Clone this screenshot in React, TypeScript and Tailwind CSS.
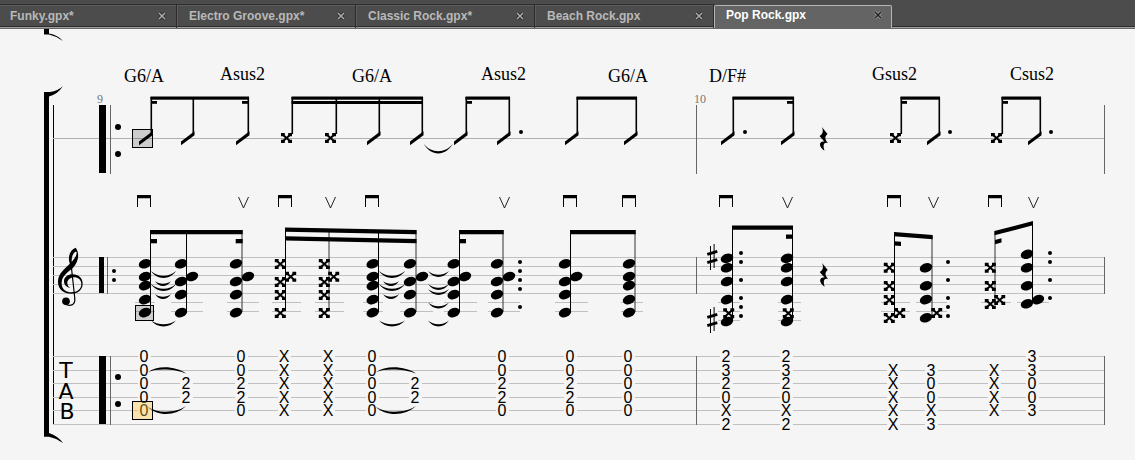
import React, { useState } from 'react';

const files = ['Funky.gpx*', 'Electro Groove.gpx*', 'Classic Rock.gpx*', 'Beach Rock.gpx', 'Pop Rock.gpx'];

type Side = 'left' | 'right';
type Point = [number, number];

const chords = [
  { x: 124, y: 82, name: 'G6/A' },
  { x: 220, y: 80, name: 'Asus2' },
  { x: 352, y: 82, name: 'G6/A' },
  { x: 481, y: 80, name: 'Asus2' },
  { x: 608, y: 82, name: 'G6/A' },
  { x: 709, y: 82, name: 'D/F#' },
  { x: 872, y: 80, name: 'Gsus2' },
  { x: 1010, y: 80, name: 'Csus2' },
];

// Rhythm staff: one entry per beamed group
interface RhythmGroup {
  stems: number[];
  dead?: number;
  double?: boolean;
  stubs?: [number, Side][];
  dots?: number[];
}

const rhythm: RhythmGroup[] = [
  { stems: [151, 193, 248], stubs: [[151, 'right'], [248, 'left']] },
  { stems: [292, 336, 379, 422], dead: 2, double: true },
  { stems: [466, 509], stubs: [[466, 'right']], dots: [521] },
  { stems: [577, 636] },
  { stems: [733, 793], stubs: [[793, 'left']], dots: [745] },
  { stems: [901, 939], dead: 1, stubs: [[901, 'right']], dots: [950] },
  { stems: [1002, 1040], dead: 1, stubs: [[1002, 'right']], dots: [1051] },
];

const downStrokes = [137, 278, 365, 563, 622, 719, 887, 988];
const upStrokes = [243.5, 330.5, 504.5, 787.5, 933.5, 1033.5];

// Standard notation
interface Chord {
  heads?: Point[];
  crosses?: Point[];
  stem: [number, number, number];
  soft?: boolean;
  ledger: [number, number];
  ledgers?: number[];
  dots?: [number, number[]];
}

const column = (x: number, ys: number[]): Point[] => ys.map((y) => [x, y]);
const OPEN = [263.7, 276.5, 285.6, 299.6, 312.6];
const SUS = [263.7, 281.5, 294.6, 312.6];
const DEAD = [264, 282, 295, 313];

const staffChords: Chord[] = [
  { heads: column(145, OPEN), stem: [150.5, 230, 312], ledger: [135, 155] },
  { heads: [...column(181, SUS), [192, 276.5]], stem: [186.5, 230, 312], ledger: [171, 203] },
  { heads: [...column(236, SUS), [248, 276.5]], stem: [242, 230, 312], soft: true, ledger: [227, 259] },
  { crosses: [...column(280.3, DEAD), [290.7, 276.7]], stem: [285.5, 228, 311], ledger: [272, 301] },
  { crosses: [...column(324.3, DEAD), [333.7, 276.7]], stem: [329, 229, 311], soft: true, ledger: [315, 344] },
  { heads: column(372.7, OPEN), stem: [378.5, 230, 312], ledger: [363, 383] },
  { heads: [...column(410, SUS), [422, 276.5]], stem: [416, 230, 312], soft: true, ledger: [400, 433] },
  { heads: [...column(453.7, SUS), [465, 276.5]], stem: [459.5, 230, 312], ledger: [444, 477] },
  {
    heads: [...column(497, SUS), [509, 276.5]],
    stem: [503, 230, 312],
    soft: true,
    ledger: [488, 520],
    dots: [520, [262, 271, 280, 289, 307]],
  },
  { heads: [...column(565, SUS), [576.3, 276.5]], stem: [570.5, 230, 312], ledger: [555, 588] },
  { heads: column(629, OPEN), stem: [635, 230, 312], soft: true, ledger: [621, 643] },
  {
    heads: column(727, [258.3, 267.7, 281.5, 299.6, 321.5]),
    crosses: [[728.7, 313.3]],
    stem: [732.5, 226, 321],
    ledger: [718, 740],
    ledgers: [302.5, 311.5, 320.5],
    dots: [741, [253, 262, 280, 298, 307, 316]],
  },
  {
    heads: column(787, [258.3, 267.7, 281.5, 299.6, 321.5]),
    crosses: [[788.3, 313.3]],
    stem: [792.5, 226, 321],
    ledger: [778, 801],
    ledgers: [302.5, 311.5, 320.5],
  },
  { crosses: [...column(889.3, [267.7, 286, 300, 318]), [899.7, 313]], stem: [894.5, 233, 317], ledger: [881, 910] },
  {
    heads: column(926, [267.7, 285.7, 299.6, 317.7]),
    crosses: [[936.7, 313]],
    stem: [932, 236, 317],
    soft: true,
    ledger: [916, 947],
    dots: [948, [262, 280, 298, 307, 316]],
  },
  {
    crosses: [...column(990.3, [267.7, 286, 304]), [999.7, 300]],
    stem: [995, 231, 303],
    soft: true,
    ledger: [981, 1011],
    ledgers: [302.5],
  },
  {
    heads: [...column(1027, [254.3, 267.7, 285.7, 303.7]), [1038, 299.6]],
    stem: [1032.5, 222, 303],
    ledger: [1017, 1049],
    ledgers: [302.5],
    dots: [1050, [253, 262, 280, 298]],
  },
];

// x1, y1, x2, y2 of the top edge
const beams = [
  [150, 230, 242.7, 230],
  [150, 239, 157, 239],
  [235.7, 239, 242.7, 239],
  [285, 227.5, 416.5, 230],
  [285, 236.3, 416.5, 239],
  [459, 230, 503.7, 230],
  [459, 239, 466, 239],
  [570, 230, 635.7, 230],
  [732, 225.5, 793, 225.5],
  [786, 234.5, 793, 234.5],
  [894, 232, 932.7, 235],
  [894, 241.3, 901, 241.8],
  [994.5, 231, 1033, 221],
  [995, 240, 1001.5, 238.3],
];

// x1, x2, y, depth
const staffTies = [
  [151, 176, 271, 7],
  [155, 171, 281, 5],
  [151, 176, 284, 7],
  [155, 171, 294, 5],
  [151, 176, 320.5, 6],
  [379, 405, 271, 7],
  [383, 399, 281, 5],
  [379, 405, 284, 7],
  [383, 399, 294, 5],
  [379, 405, 320.5, 6],
  [428, 449, 271, 6],
  [428, 449, 284, 6],
  [428, 449, 289, 6],
  [428, 449, 302.5, 6],
  [428, 449, 320.5, 6],
];

// Tablature: frets from the first string down, '' where nothing is played
const STRINGS = [356.5, 370.5, 383.5, 397.5, 410.5, 424.5];

const tab: { x: number; frets: string[] }[] = [
  { x: 144, frets: ['0', '0', '0', '0', '0'] },
  { x: 186, frets: ['', '', '2', '2'] },
  { x: 241, frets: ['0', '0', '2', '2', '0'] },
  { x: 284, frets: ['X', 'X', 'X', 'X', 'X'] },
  { x: 328, frets: ['X', 'X', 'X', 'X', 'X'] },
  { x: 372, frets: ['0', '0', '0', '0', '0'] },
  { x: 415, frets: ['', '', '2', '2'] },
  { x: 502, frets: ['0', '0', '2', '2', '0'] },
  { x: 570, frets: ['0', '0', '2', '2', '0'] },
  { x: 628, frets: ['0', '0', '0', '0', '0'] },
  { x: 726, frets: ['2', '3', '2', '0', 'X', '2'] },
  { x: 786, frets: ['2', '3', '2', '0', 'X', '2'] },
  { x: 893, frets: ['', 'X', 'X', 'X', 'X', 'X'] },
  { x: 931, frets: ['', '3', '0', '0', 'X', '3'] },
  { x: 994, frets: ['', 'X', 'X', 'X', 'X'] },
  { x: 1032, frets: ['3', '3', '0', '0', '3'] },
];

const Tie: React.FC<{ x1: number; x2: number; y: number; y2?: number; depth: number }> = ({ x1, x2, y, y2 = y, depth }) => {
  const w = (x2 - x1) * 0.25;
  const outer = depth * 1.33;
  const inner = (depth - (depth > 0 ? 2.3 : -2.3)) * 1.33;
  return (
    <path
      d={`M${x1} ${y}C${x1 + w} ${y + outer} ${x2 - w} ${y2 + outer} ${x2} ${y2}C${x2 - w} ${y2 + inner} ${x1 + w} ${y + inner} ${x1} ${y}Z`}
    />
  );
};

const Cross: React.FC<{ x: number; y: number }> = ({ x, y }) => (
  <g transform={`translate(${x} ${y})`}>
    <path d="M-4-3.5 4 3.5M-4 3.5 4-3.5" stroke="#000" strokeWidth="2" />
    <path d="M-5.5-5h3.8v3.3h-3.800zM1.700-5h3.800v3.300H1.700zM-5.500 1.700h3.800V5h-3.800zM1.700 1.700h3.800V5H1.700z" />
  </g>
);

const Head: React.FC<{ x: number; y: number }> = ({ x, y }) => (
  <ellipse cx={x} cy={y} rx="6.4" ry="4.5" transform={`rotate(-20 ${x} ${y})`} />
);

const Rest: React.FC<{ x: number; y: number }> = ({ x, y }) => (
  <path
    transform={`translate(${x} ${y}) scale(.333)`}
    d="M-5-36 12-15C3-7 3 0 14 13 2 8-3 17 3 35-16 24-14 4 3 8L-12-9C-1-15 0-24-5-36Z"
  />
);

const Sharp: React.FC<{ x: number; y: number }> = ({ x, y }) => (
  <g transform={`translate(${x} ${y})`} stroke="#000">
    <path d="M-1.8-11V13M1.8-13V11" strokeWidth="1" />
    <path d="M-5-2.6 5-5.6M-5 5.6 5 2.6" strokeWidth="2.8" />
  </g>
);

const RepeatStart: React.FC<{ y: number; height: number; width: number; thin: number; dots: Point[]; r: number }> = ({
  y,
  height,
  width,
  thin,
  dots,
  r,
}) => (
  <g>
    <rect x="99" y={y} width={width} height={height} />
    <path d={`M${thin} ${y}v${height + 1}`} stroke="#666" />
    {dots.map(([cx, cy]) => (
      <circle key={cy} cx={cx} cy={cy} r={r} />
    ))}
  </g>
);

const RhythmStaff: React.FC = () => (
  <g>
    <path d="M53 138.5H1104" stroke="#b0b0b0" />
    <RepeatStart y={105} height={68} width={7} thin={110.5} r={3} dots={[[118, 127], [118, 154]]} />
    <path d="M696.5 105v69M1104.5 105v69" stroke="#666" />
    {rhythm.map(({ stems, dead = 0, double, stubs = [], dots = [] }) => {
      const first = stems[0];
      const width = stems[stems.length - 1] - first + 1.5;
      return (
        <g key={first}>
          <rect x={first - 0.5} y="96.5" width={width} height="3.2" />
          {double && <rect x={first - 0.5} y="101" width={width} height="3" />}
          {stubs.map(([x, side]) => (
            <rect key={x} x={side === 'right' ? x : x - 6} y="101" width="6" height="2.8" />
          ))}
          {stems.map((x, i) => (
            <g key={x}>
              <path d={`M${x + 0.3} 97V134`} stroke="#000" strokeWidth="1.6" />
              {i < dead ? (
                <Cross x={x - 5.5} y={138} />
              ) : (
                <path d={`M${x - 12} 141.500 ${x + 1.5} 131.200V135.200L${x - 12} 145.300Z`} />
              )}
            </g>
          ))}
          {dots.map((x) => (
            <circle key={x} cx={x} cy="132" r="2" />
          ))}
        </g>
      );
    })}
    <Tie x1={423.5} x2={453} y={143.5} depth={10} />
    <Rest x={823.5} y={139} />
    <rect x="132.5" y="129.5" width="20" height="18" fill="#000" fillOpacity=".16" stroke="#000" />
  </g>
);

const Strokes: React.FC = () => (
  <g>
    {downStrokes.map((x) => (
      <path key={x} d={`M${x} 195h14v12h-1v-8.700h-12v8.700h-1z`} />
    ))}
    {upStrokes.map((x) => (
      <path key={x} d={`M${x - 5} 197 ${x} 208 ${x + 5} 197`} fill="none" stroke="#222" />
    ))}
  </g>
);

const TrebleClef: React.FC = () => (
  <g transform="translate(30 215) scale(.3333)">
    <path d="M122 152C110 128 120 104 137 98C150 116 146 140 128 160C108 176 94 186 95 207C96 224 110 232 124 232C142 232 154 222 154 208C154 194 144 187 133 187C121 187 112 195 112 204C112 211 116 216 121 219C108 217 102 208 102 199C102 186 114 178 128 178C146 178 158 190 158 206C158 224 144 236 124 236C102 236 84 224 84 200C84 176 104 162 118 148C132 134 141 122 140 112C136 104 121 122 126 148Z" />
    <path d="M123 146 134 246C137 266 128 271 119 271Q111 271 106 266" fill="none" stroke="#000" strokeWidth="3.500" />
    <circle cx="108" cy="259" r="11.500" />
  </g>
);

const NotationStaff: React.FC = () => (
  <g>
    <path d="M53 257.5H1104M53 266.5H1104M53 275.5H1104M53 284.5H1104M53 293.5H1104" stroke="#c0c0c0" />
    <TrebleClef />
    <RepeatStart y={257} height={36} width={5} thin={107.5} r={2} dots={[[114, 271], [114, 280]]} />
    <path d="M696.5 257v37M1104.5 257v37" stroke="#666" />
    {staffChords.map(({ heads = [], crosses = [], stem, soft, ledger, ledgers = [302.5, 311.5], dots }) => (
      <g key={stem[0]}>
        {ledgers.map((y) => (
          <path key={y} d={`M${ledger[0]} ${y}H${ledger[1]}`} stroke="#c0c0c0" />
        ))}
        <path d={`M${stem[0]} ${stem[1]}V${stem[2]}`} stroke={soft ? '#333' : '#000'} />
        {heads.map(([x, y]) => (
          <Head key={`${x}-${y}`} x={x} y={y} />
        ))}
        {crosses.map(([x, y]) => (
          <Cross key={`${x}-${y}`} x={x} y={y} />
        ))}
        {dots && dots[1].map((y) => <circle key={y} cx={dots[0]} cy={y} r="2" />)}
      </g>
    ))}
    {beams.map(([x1, y1, x2, y2]) => (
      <path key={`${x1}-${y1}`} d={`M${x1} ${y1}L${x2} ${y2}v4.300L${x1} ${y1 + 4.3}z`} />
    ))}
    {staffTies.map(([x1, x2, y, depth]) => (
      <Tie key={`${x1}-${y}`} x1={x1} x2={x2} y={y} depth={depth} />
    ))}
    <Sharp x={712.3} y={257} />
    <Sharp x={712.3} y={320} />
    <Rest x={823.7} y={275} />
    <rect x="135.500" y="305.500" width="18" height="15" fill="#000" fillOpacity=".16" stroke="#000" />
  </g>
);

const TabStaff: React.FC = () => (
  <g>
    {STRINGS.map((y) => (
      <path key={y} d={`M53 ${y}H1104`} stroke="#c0c0c0" />
    ))}
    <RepeatStart y={356} height={68} width={7} thin={110.5} r={3} dots={[[118, 377], [118, 404]]} />
    <path d="M696.5 356v69M1104.5 356v69" stroke="#666" />
    <g textAnchor="middle" className="font-['DejaVu_Sans',sans-serif] text-[22px]">
      <text x="66" y="378">T</text>
      <text x="66" y="399">A</text>
      <text x="67" y="419">B</text>
    </g>
    <g textAnchor="middle" className="font-['Liberation_Sans',Arial,sans-serif] text-base">
      {tab.map(({ x, frets }) =>
        frets.map(
          (fret, i) =>
            fret && (
              <g key={`${x}-${i}`}>
                <rect x={x - 6} y={STRINGS[i] - 1} width="13" height="2" fill="#f5f5f5" />
                <text x={x} y={STRINGS[i] + 5.5}>
                  {fret}
                </text>
              </g>
            ),
        ),
      )}
    </g>
    <Tie x1={148} x2={186} y={372} y2={373.5} depth={-5.5} />
    <Tie x1={148} x2={186} y={407} y2={406} depth={7.5} />
    <Tie x1={376} x2={416} y={372} y2={373.5} depth={-5.5} />
    <Tie x1={376} x2={416} y={407} y2={406} depth={7.5} />
    <rect x="132.500" y="401.500" width="20" height="18" fill="#ffc83c" fillOpacity=".38" stroke="#000" />
  </g>
);

const Score: React.FC = () => (
  <svg viewBox="0 29 1135 431" className="block w-full h-auto" role="img" aria-label="Pop Rock">
    {/* system bracket, with the tail of the previous one above */}
    <path d="M44 29h5v4.500Q58 35 63 41Q56 36 49 34.500H44Z" />
    <path d="M44 92h6Q58 91 63 86Q58 94 49 96.500V433Q58 436 63 443Q56 438 49 436.700H44Z" />
    <path d="M53.5 105V424.500" stroke="#000" />

    <g className="font-['Liberation_Serif','Times_New_Roman',serif] text-[18px]">
      {chords.map(({ x, y, name }) => (
        <text key={x} x={x} y={y}>
          {name}
        </text>
      ))}
    </g>
    <g fill="#777" className="font-['Liberation_Serif','Times_New_Roman',serif] text-xs">
      <text x="97" y="103">9</text>
      <text x="694" y="103">10</text>
    </g>

    <RhythmStaff />
    <Strokes />
    <NotationStaff />
    <TabStaff />
  </svg>
);

const FileTabs: React.FC<{ active: string; onSelect: (name: string) => void }> = ({ active, onSelect }) => (
  <nav className="flex items-stretch h-[29px] pt-1 bg-[#4b4c4b] border-b border-[#666766] overflow-hidden font-['Liberation_Sans',Arial,sans-serif]">
    {files.map((name) => {
      const selected = name === active;
      return (
        <div
          key={name}
          className={
            selected
              ? 'flex items-center justify-between w-[178px] mt-px pb-1 pl-[11px] pr-[9px] text-white bg-[#636463] border-l border-t border-r border-[#b4b4b4] rounded-t-xs'
              : 'flex items-center justify-between w-[179px] first:-ml-0.5 pb-0.5 pl-3 pr-2.5 text-[#b9b9b9] border-t border-t-[#2d2d2d] border-r border-r-[#2d2d2d] shadow-[inset_0_-1px_0_#a0a0a0,inset_0_-2px_0_#2d2d2d,inset_1px_1px_0_#5c5d5c]'
          }
        >
          <button type="button" onClick={() => onSelect(name)} className="text-xs font-bold whitespace-nowrap">
            {name}
          </button>
          <button type="button" aria-label={`Close ${name}`} className={selected ? 'text-[#222]' : 'text-[#b0b0b0]'}>
            <svg viewBox="0 0 8 8" className="w-2 h-2">
              <path d="M1 1l6 6M7 1l-6 6" stroke={selected ? '#a0a0a0' : '#222'} strokeWidth="3" />
              <path d="M1 1l6 6M7 1l-6 6" stroke="currentColor" strokeWidth="1.500" />
            </svg>
          </button>
        </div>
      );
    })}
    <div className="flex-1 shadow-[inset_0_-1px_0_#a0a0a0,inset_0_-2px_0_#2d2d2d]" />
  </nav>
);

export default function App() {
  const [active, setActive] = useState('Pop Rock.gpx');

  return (
    <div className="min-h-screen bg-[#f5f5f5] text-black">
      <FileTabs active={active} onSelect={setActive} />
      <main>
        <Score />
      </main>
    </div>
  );
}
